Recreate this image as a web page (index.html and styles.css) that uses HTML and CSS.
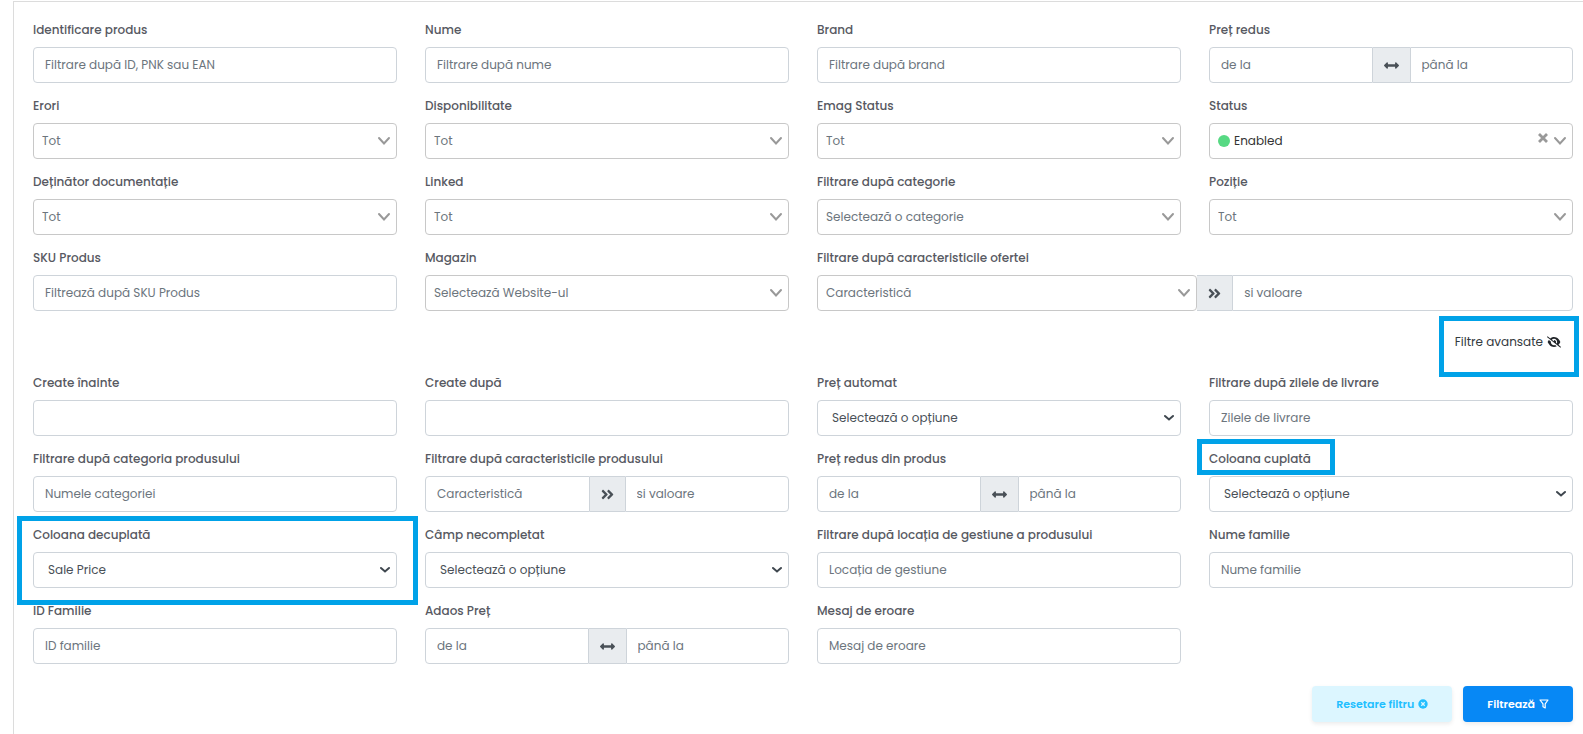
FILE: index.html
```html
<!DOCTYPE html>
<html lang="ro">
<head>
    <meta charset="UTF-8">
    <meta name="viewport" content="width=device-width, initial-scale=1.0">
    <title>Filtre produse</title>
    <link rel="stylesheet" href="styles.css">
</head>
<body>
    <svg class="sprite" aria-hidden="true">
        <symbol id="chevron" viewBox="0 0 14 10">
            <path d="M2 2l5 5.500 5-5.500" fill="none" stroke="currentColor" stroke-width="2" stroke-linecap="round"/>
        </symbol>
        <symbol id="caret" viewBox="0 0 10 8">
            <path d="M1 2l4 3.500L9 2" fill="none" stroke="currentColor" stroke-width="2" stroke-linecap="round"/>
        </symbol>
        <symbol id="cross" viewBox="0 0 10 10">
            <path d="M1 1l8 8M9 1l-8 8" fill="none" stroke="currentColor" stroke-width="2.800"/>
        </symbol>
        <symbol id="arrows" viewBox="0 0 512 512">
            <path fill="currentColor" d="M377.941 169.941V216H134.059v-46.059c0-21.382-25.851-32.09-40.971-16.971L7.029 239.029c-9.373 9.373-9.373 24.568 0 33.941l86.059 86.059c15.119 15.119 40.971 4.411 40.971-16.971V296h243.882v46.059c0 21.382 25.851 32.09 40.971 16.971l86.059-86.059c9.373-9.373 9.373-24.568 0-33.941l-86.059-86.059c-15.119-15.12-40.971-4.412-40.971 16.97z"/>
        </symbol>
        <symbol id="double-right" viewBox="0 0 448 512">
            <path fill="currentColor" d="M224.3 273l-136 136c-9.4 9.4-24.6 9.4-33.9 0l-22.6-22.6c-9.4-9.4-9.4-24.6 0-33.9l96.4-96.4-96.4-96.4c-9.4-9.4-9.4-24.6 0-33.9L54.3 103c9.4-9.4 24.6-9.4 33.9 0l136 136c9.5 9.4 9.5 24.6.1 34zm192-34l-136-136c-9.4-9.4-24.6-9.4-33.9 0l-22.6 22.6c-9.4 9.4-9.4 24.6 0 33.9l96.4 96.4-96.4 96.4c-9.4 9.4-9.4 24.6 0 33.9l22.6 22.6c9.4 9.4 24.6 9.4 33.9 0l136-136c9.4-9.2 9.4-24.4 0-33.8z"/>
        </symbol>
    </svg>

    <form class="filters">
        <div class="grid">
            <div class="field">
                <label for="product">Identificare produs</label>
                <input type="text" id="product" placeholder="Filtrare după ID, PNK sau EAN">
            </div>
            <div class="field">
                <label for="name">Nume</label>
                <input type="text" id="name" placeholder="Filtrare după nume">
            </div>
            <div class="field">
                <label for="brand">Brand</label>
                <input type="text" id="brand" placeholder="Filtrare după brand">
            </div>
            <div class="field">
                <label for="priceFrom">Preț redus</label>
                <div class="group">
                    <input type="text" id="priceFrom" placeholder="de la">
                    <span class="addon"><svg class="icon-arrows"><use href="#arrows"/></svg></span>
                    <input type="text" aria-label="Preț redus până la" placeholder="până la">
                </div>
            </div>

            <div class="field">
                <label for="errors">Erori</label>
                <div class="picker">
                    <select id="errors"><option>Tot</option></select>
                    <svg class="chevron"><use href="#chevron"/></svg>
                </div>
            </div>
            <div class="field">
                <label for="availability">Disponibilitate</label>
                <div class="picker">
                    <select id="availability"><option>Tot</option></select>
                    <svg class="chevron"><use href="#chevron"/></svg>
                </div>
            </div>
            <div class="field">
                <label for="emagStatus">Emag Status</label>
                <div class="picker">
                    <select id="emagStatus"><option>Tot</option></select>
                    <svg class="chevron"><use href="#chevron"/></svg>
                </div>
            </div>
            <div class="field">
                <label for="status">Status</label>
                <div class="picker picker-status">
                    <select id="status"><option>Enabled</option></select>
                    <span class="dot"></span>
                    <button type="button" class="clear" aria-label="Șterge"><svg><use href="#cross"/></svg></button>
                    <svg class="chevron"><use href="#chevron"/></svg>
                </div>
            </div>

            <div class="field">
                <label for="docOwner">Deținător documentație</label>
                <div class="picker">
                    <select id="docOwner"><option>Tot</option></select>
                    <svg class="chevron"><use href="#chevron"/></svg>
                </div>
            </div>
            <div class="field">
                <label for="linked">Linked</label>
                <div class="picker">
                    <select id="linked"><option>Tot</option></select>
                    <svg class="chevron"><use href="#chevron"/></svg>
                </div>
            </div>
            <div class="field">
                <label for="category">Filtrare după categorie</label>
                <div class="picker">
                    <select id="category"><option>Selectează o categorie</option></select>
                    <svg class="chevron"><use href="#chevron"/></svg>
                </div>
            </div>
            <div class="field">
                <label for="position">Poziție</label>
                <div class="picker">
                    <select id="position"><option>Tot</option></select>
                    <svg class="chevron"><use href="#chevron"/></svg>
                </div>
            </div>

            <div class="field">
                <label for="sku">SKU Produs</label>
                <input type="text" id="sku" placeholder="Filtrează după SKU Produs">
            </div>
            <div class="field">
                <label for="store">Magazin</label>
                <div class="picker">
                    <select id="store"><option>Selectează Website-ul</option></select>
                    <svg class="chevron"><use href="#chevron"/></svg>
                </div>
            </div>
            <div class="field field-wide">
                <label for="offerAttr">Filtrare după caracteristicile ofertei</label>
                <div class="group">
                    <div class="picker">
                        <select id="offerAttr"><option>Caracteristică</option></select>
                        <svg class="chevron"><use href="#chevron"/></svg>
                    </div>
                    <span class="addon"><svg class="icon-double"><use href="#double-right"/></svg></span>
                    <input type="text" aria-label="Valoare caracteristică ofertă" placeholder="si valoare">
                </div>
            </div>
        </div>

        <div class="advanced">
            <button type="button" class="toggle">
                Filtre avansate
                <svg class="icon-eye" viewBox="0 0 640 512"><path fill="currentColor" d="M38.8 5.1C28.4-3.1 13.3-1.2 5.1 9.2S-1.2 34.7 9.2 42.9l592 464c10.4 8.2 25.5 6.3 33.7-4.1s6.3-25.5-4.1-33.7L525.6 386.7c39.6-40.6 66.4-86.1 79.9-118.4c3.3-7.9 3.3-16.7 0-24.6c-14.9-35.7-46.2-87.7-93-131.1C465.5 68.8 400.8 32 320 32c-68.2 0-125 26.3-169.3 60.8L38.8 5.1zM223.1 149.5C248.6 126.2 282.7 112 320 112c79.5 0 144 64.5 144 144c0 24.9-6.3 48.3-17.4 68.7L408 294.5c8.4-19.3 10.6-41.4 4.8-63.3c-11.1-41.5-47.8-69.4-88.6-71.1c-5.8-.2-9.2 6.1-7.4 11.7c2.1 6.4 3.3 13.2 3.3 20.3c0 10.2-2.4 19.8-6.6 28.3l-90.3-70.8zM373 389.9c-16.4 6.5-34.3 10.1-53 10.1c-79.5 0-144-64.5-144-144c0-6.9 .5-13.6 1.4-20.200L83.1 161.500C60.300 191.200 44 220.800 34.500 243.700c-3.300 7.900-3.300 16.700 0 24.600c14.900 35.700 46.200 87.700 93 131.100C174.500 443.200 239.200 480 320 480c47.800 0 89.900-12.900 126.200-32.500L373 389.900z"/></svg>
                <span class="mark mark-toggle"></span>
            </button>
        </div>

        <div class="grid">
            <div class="field">
                <label for="createdBefore">Create înainte</label>
                <input type="text" id="createdBefore">
            </div>
            <div class="field">
                <label for="createdAfter">Create după</label>
                <input type="text" id="createdAfter">
            </div>
            <div class="field">
                <label for="autoPrice">Preț automat</label>
                <div class="picker picker-native">
                    <select id="autoPrice"><option>Selectează o opțiune</option></select>
                    <svg class="caret"><use href="#caret"/></svg>
                </div>
            </div>
            <div class="field">
                <label for="deliveryDays">Filtrare după zilele de livrare</label>
                <input type="text" id="deliveryDays" placeholder="Zilele de livrare">
            </div>

            <div class="field">
                <label for="productCategory">Filtrare după categoria produsului</label>
                <input type="text" id="productCategory" placeholder="Numele categoriei">
            </div>
            <div class="field">
                <label for="productAttr">Filtrare după caracteristicile produsului</label>
                <div class="group">
                    <input type="text" id="productAttr" placeholder="Caracteristică">
                    <span class="addon"><svg class="icon-double"><use href="#double-right"/></svg></span>
                    <input type="text" aria-label="Valoare caracteristică produs" placeholder="si valoare">
                </div>
            </div>
            <div class="field">
                <label for="productPrice">Preț redus din produs</label>
                <div class="group">
                    <input type="text" id="productPrice" placeholder="de la">
                    <span class="addon"><svg class="icon-arrows"><use href="#arrows"/></svg></span>
                    <input type="text" aria-label="Preț redus din produs până la" placeholder="până la">
                </div>
            </div>
            <div class="field">
                <label for="coupled">Coloana cuplată</label>
                <div class="picker picker-native">
                    <select id="coupled"><option>Selectează o opțiune</option></select>
                    <svg class="caret"><use href="#caret"/></svg>
                </div>
                <span class="mark mark-label"></span>
            </div>

            <div class="field">
                <label for="decoupled">Coloana decuplată</label>
                <div class="picker picker-native">
                    <select id="decoupled"><option>Sale Price</option></select>
                    <svg class="caret"><use href="#caret"/></svg>
                </div>
                <span class="mark mark-field"></span>
            </div>
            <div class="field">
                <label for="missingField">Câmp necompletat</label>
                <div class="picker picker-native">
                    <select id="missingField"><option>Selectează o opțiune</option></select>
                    <svg class="caret"><use href="#caret"/></svg>
                </div>
            </div>
            <div class="field">
                <label for="location">Filtrare după locația de gestiune a produsului</label>
                <input type="text" id="location" placeholder="Locația de gestiune">
            </div>
            <div class="field">
                <label for="familyName">Nume familie</label>
                <input type="text" id="familyName" placeholder="Nume familie">
            </div>

            <div class="field">
                <label for="familyId">ID Familie</label>
                <input type="text" id="familyId" placeholder="ID familie">
            </div>
            <div class="field">
                <label for="markup">Adaos Preț</label>
                <div class="group">
                    <input type="text" id="markup" placeholder="de la">
                    <span class="addon"><svg class="icon-arrows"><use href="#arrows"/></svg></span>
                    <input type="text" aria-label="Adaos Preț până la" placeholder="până la">
                </div>
            </div>
            <div class="field">
                <label for="errorMessage">Mesaj de eroare</label>
                <input type="text" id="errorMessage" placeholder="Mesaj de eroare">
            </div>
        </div>

        <div class="actions">
            <button type="reset" class="btn btn-light">
                Resetare filtru
                <svg viewBox="0 0 10 10"><circle cx="5" cy="5" r="4.700" fill="currentColor"/><path d="M3.300 3.300l3.400 3.400M6.700 3.300L3.300 6.700" stroke="#dcf6ff" stroke-width="1.300"/></svg>
            </button>
            <button type="submit" class="btn btn-primary">
                Filtrează
                <svg viewBox="0 0 10 10"><path d="M1 1h8L6.200 4.800v4.200L4 7.800v-3z" fill="none" stroke="currentColor" stroke-width="1.200" stroke-linejoin="round"/></svg>
            </button>
        </div>
    </form>
</body>
</html>
```
FILE: styles.css
```css
* {
    box-sizing: border-box;
}
body {
    margin: 0;
    background-color: #fff;
    font-family: Poppins, Inter, sans-serif;
    font-size: 12px;
    line-height: 20px;
    color: #495057;
}
.sprite {
    display: none;
}
.filters {
    margin: 1px 0 0 13px;
    padding: 18px 10px 12px 19px;
    border-top: 1px solid #dcdcdc;
    border-left: 1px solid #dcdcdc;
}
.grid {
    display: grid;
    grid-template-columns: repeat(4, minmax(0, 1fr));
    gap: 13px 28px;
}
.field {
    position: relative;
    display: flex;
    flex-direction: column;
    gap: 7px;
}
.field-wide {
    grid-column: span 2;
}
label {
    font-weight: 500;
    color: #575962;
}
input,
select {
    width: 100%;
    min-width: 0;
    height: 36px;
    padding: 0 11px;
    border: 1px solid #ced4da;
    border-radius: 4px;
    background-color: #fff;
    font: inherit;
    color: #495057;
}
input::placeholder {
    color: #6c757d;
    opacity: 1;
}
.picker {
    position: relative;
    width: 100%;
}
.picker select {
    display: block;
    appearance: none;
    padding: 0 30px 0 8px;
    border-color: #c8c8c8;
    color: #6c757d;
}
.picker-native select {
    padding-left: 14px;
    border-color: #ced4da;
    color: #495057;
}
.picker-status select {
    padding-left: 24px;
    color: #333;
}
.chevron,
.caret {
    position: absolute;
    top: 13px;
    right: 6px;
    width: 14px;
    height: 10px;
    color: #999;
    pointer-events: none;
}
.caret {
    top: 14px;
    right: 7px;
    width: 10px;
    height: 8px;
    color: #3f474f;
}
.dot {
    position: absolute;
    top: 12px;
    left: 9px;
    width: 12px;
    height: 12px;
    border-radius: 50%;
    background-color: #57d983;
}
.clear {
    position: absolute;
    top: 10px;
    right: 25px;
    display: flex;
    padding: 0;
    border: 0;
    background: none;
    color: #999;
    cursor: pointer;
}
.clear svg {
    width: 10px;
    height: 10px;
}

.group {
    display: flex;
}
.group > input,
.group > .picker {
    flex: 1;
}
.group > .picker {
    flex-grow: 1.2;
}
.group > input:first-child {
    border-radius: 4px 0 0 4px;
}
.group > input:last-child {
    border-radius: 0 4px 4px 0;
}
.addon {
    display: flex;
    align-items: center;
    padding: 0 11px;
    border: 1px solid #ced4da;
    border-width: 1px 0;
    background-color: #e9ecef;
}
.icon-arrows {
    width: 15px;
    height: 15px;
}
.icon-double {
    width: 13px;
    height: 15px;
}

.advanced {
    display: flex;
    justify-content: flex-end;
    padding: 21px 0;
}
.toggle {
    position: relative;
    display: flex;
    align-items: center;
    gap: 4px;
    padding: 0 12px;
    border: 0;
    background: none;
    font: inherit;
    color: #343a40;
    cursor: pointer;
}
.icon-eye {
    width: 14px;
    height: 12px;
    color: #212529;
}

.mark {
    position: absolute;
    border: 5px solid #00a2e8;
    pointer-events: none;
}
.mark-toggle {
    inset: -16px -6px -25px -4px;
}
.mark-label {
    top: -10px;
    left: -12px;
    width: 138px;
    height: 36px;
}
.mark-field {
    inset: -9px -21px -17px -16px;
}

.actions {
    display: flex;
    justify-content: flex-end;
    gap: 11px;
    margin-top: 22px;
}
.btn {
    display: flex;
    align-items: center;
    gap: 4px;
    height: 36px;
    padding: 0 24px;
    border: 0;
    border-radius: 4px;
    box-shadow: 0 2px 4px rgba(0, 0, 0, 0.08);
    font: inherit;
    font-size: 11px;
    font-weight: 600;
    cursor: pointer;
}
.btn svg {
    width: 10px;
    height: 10px;
}
.btn-light {
    background-color: #dcf6ff;
    color: #22bfff;
}
.btn-primary {
    background-color: #0788f5;
    color: #fff;
}
```
